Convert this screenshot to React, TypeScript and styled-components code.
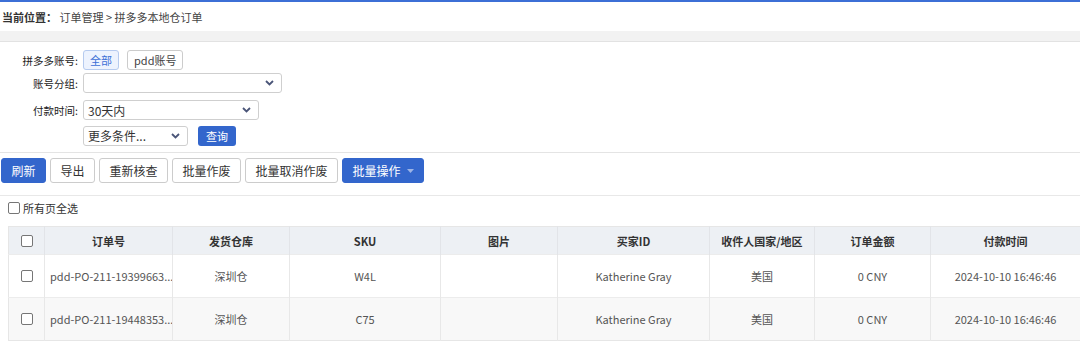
import React from "react"
import styled, { createGlobalStyle } from "styled-components"

const GlobalStyle = createGlobalStyle`
  html, body {
    margin: 0;
    padding: 0;
    background: #ffffff;
  }
  body {
    font-family: "Microsoft YaHei", "Noto Sans CJK SC", sans-serif;
    font-size: 11px;
    color: #333333;
  }
  * {
    box-sizing: border-box;
  }
`

const Page = styled.div`
  width: 1080px;
  border-top: 2px solid #3c6fd6;
`

const Breadcrumb = styled.div`
  height: 29px;
  display: flex;
  align-items: center;
  padding-left: 2px;
  font-size: 11px;
  color: #444;
  white-space: pre;

  b {
    font-weight: 700;
    color: #333;
  }
`

const GrayBand = styled.div`
  height: 11px;
  background: #f2f2f2;
  border-bottom: 1px solid #e2e2e2;
`

const FilterPanel = styled.div`
  padding: 8px 0 0 0;
  border-bottom: 1px solid #e4e4e4;
  display: grid;
  grid-template-columns: 80px 1fr;
  grid-auto-rows: 20px;
  row-gap: 3px;
  align-items: center;
  height: 111px;
`

const Label = styled.div<{ $gap?: number }>`
  text-align: right;
  padding-right: 2px;
  color: #222;
  font-size: 10.5px;
  margin-top: ${(p) => p.$gap || 0}px;
`

const Controls = styled.div<{ $gap?: number }>`
  display: flex;
  align-items: center;
  gap: 8px;
  padding-left: 3px;
  margin-top: ${(p) => p.$gap || 0}px;
`

const Chip = styled.button<{ $active?: boolean }>`
  height: 20px;
  padding: 0 6px;
  font: inherit;
  font-size: 11px;
  border-radius: 3px;
  border: 1px solid ${(p) => (p.$active ? "#b6cbef" : "#cccccc")};
  background: ${(p) => (p.$active ? "#edf3fe" : "#ffffff")};
  color: ${(p) => (p.$active ? "#3c6fd6" : "#444")};
`

const SelectBox = styled.div<{ $width: number }>`
  width: ${(p) => p.$width}px;
  height: 20px;
  border: 1px solid #cfcfcf;
  border-radius: 3px;
  display: flex;
  align-items: center;
  justify-content: space-between;
  padding: 0 7px 0 4px;
  font-size: 12px;
  color: #333;
  background: #fff;
`

const QueryButton = styled.button`
  height: 20px;
  width: 38px;
  margin-left: 2px;
  border: none;
  border-radius: 3px;
  background: #3366cc;
  color: #fff;
  font: inherit;
  font-size: 11px;
`

const Toolbar = styled.div`
  display: flex;
  gap: 4px;
  padding: 5px 0 12px 1px;
  border-bottom: 1px solid #e8e8e8;
`

const ToolButton = styled.button<{ $primary?: boolean }>`
  height: 25px;
  padding: 0 9.5px;
  font: inherit;
  font-size: 12px;
  border-radius: 3px;
  border: 1px solid ${(p) => (p.$primary ? "#3366cc" : "#cccccc")};
  background: ${(p) => (p.$primary ? "#3366cc" : "#ffffff")};
  color: ${(p) => (p.$primary ? "#ffffff" : "#333")};
  display: flex;
  align-items: center;
  gap: 6px;
`

const SelectAll = styled.label`
  display: flex;
  align-items: center;
  gap: 3px;
  height: 24px;
  padding-left: 8px;
  font-size: 11px;
  color: #333;
`

const Check = styled.input.attrs({ type: "checkbox" })`
  appearance: none;
  margin: 0;
  width: 12px;
  height: 12px;
  border: 1px solid #767676;
  border-radius: 2px;
  background: #fff;
`

const Table = styled.table`
  margin: 6px 0 0 8px;
  width: 1072px;
  border-collapse: collapse;
  table-layout: fixed;
  border: 1px solid #e6e6e6;
  font-size: 11px;
`

const Th = styled.th`
  height: 28px;
  background: #edf0f4;
  color: #333;
  font-weight: 700;
  border-right: 1px solid #e2e4e8;
  padding: 0;
  text-align: center;
`

const Tr = styled.tr<{ $alt?: boolean }>`
  background: ${(p) => (p.$alt ? "#f8f8f8" : "#ffffff")};
`

const Td = styled.td<{ $left?: boolean }>`
  height: 43px;
  color: #555;
  border-right: 1px solid #e8e8e8;
  border-top: 1px solid #ececec;
  text-align: ${(p) => (p.$left ? "left" : "center")};
  padding: ${(p) => (p.$left ? "0 0 0 5px" : "0")};
  white-space: nowrap;
  overflow: hidden;
`

const CheckCell = styled.div`
  display: flex;
  justify-content: center;
  align-items: center;
`

const Chevron = () => (
  <svg width="9" height="6" viewBox="0 0 9 6">
    <path d="M1 1 L4.5 4.5 L8 1" fill="none" stroke="#4a5578" strokeWidth="1.8" />
  </svg>
)

const Caret = () => (
  <svg width="7" height="4" viewBox="0 0 7 4">
    <path d="M0 0 L7 0 L3.5 4 Z" fill="#9db4e6" />
  </svg>
)

const columns = [
  { key: "check", width: 36 },
  { key: "订单号", width: 128 },
  { key: "发货仓库", width: 117 },
  { key: "SKU", width: 151 },
  { key: "图片", width: 117 },
  { key: "买家ID", width: 152 },
  { key: "收件人国家/地区", width: 105 },
  { key: "订单金额", width: 116 },
  { key: "付款时间", width: 150 },
]

const orders = [
  { id: "pdd-PO-211-19399663...", wh: "深圳仓", sku: "W4L", buyer: "Katherine Gray", country: "美国", amount: "0 CNY", time: "2024-10-10 16:46:46" },
  { id: "pdd-PO-211-19448353...", wh: "深圳仓", sku: "C75", buyer: "Katherine Gray", country: "美国", amount: "0 CNY", time: "2024-10-10 16:46:46" },
]

const App: React.FC = () => {
  return (
    <Page>
      <GlobalStyle />
      <Breadcrumb>
        <b>当前位置：</b>
        {" 订单管理 > 拼多多本地仓订单"}
      </Breadcrumb>
      <GrayBand />

      <FilterPanel>
        <Label>拼多多账号:</Label>
        <Controls>
          <Chip $active>全部</Chip>
          <Chip>pdd账号</Chip>
        </Controls>

        <Label>账号分组:</Label>
        <Controls>
          <SelectBox $width={199}>
            <span />
            <Chevron />
          </SelectBox>
        </Controls>

        <Label $gap={8}>付款时间:</Label>
        <Controls $gap={8}>
          <SelectBox $width={176}>
            <span>30天内</span>
            <Chevron />
          </SelectBox>
        </Controls>

        <Label $gap={13} />
        <Controls $gap={13}>
          <SelectBox $width={105}>
            <span>更多条件...</span>
            <Chevron />
          </SelectBox>
          <QueryButton>查询</QueryButton>
        </Controls>
      </FilterPanel>

      <Toolbar>
        <ToolButton $primary>刷新</ToolButton>
        <ToolButton>导出</ToolButton>
        <ToolButton>重新核查</ToolButton>
        <ToolButton>批量作废</ToolButton>
        <ToolButton>批量取消作废</ToolButton>
        <ToolButton $primary>
          批量操作
          <Caret />
        </ToolButton>
      </Toolbar>

      <SelectAll>
        <Check />
        所有页全选
      </SelectAll>

      <Table>
        <colgroup>
          {columns.map((c) => (
            <col key={c.key} style={{ width: c.width }} />
          ))}
        </colgroup>
        <thead>
          <tr>
            {columns.map((c) => (
              <Th key={c.key}>
                {c.key === "check" ? (
                  <CheckCell>
                    <Check />
                  </CheckCell>
                ) : (
                  c.key
                )}
              </Th>
            ))}
          </tr>
        </thead>
        <tbody>
          {orders.map((o, i) => (
            <Tr key={o.id} $alt={i % 2 === 1}>
              <Td>
                <CheckCell>
                  <Check />
                </CheckCell>
              </Td>
              <Td $left>{o.id}</Td>
              <Td>{o.wh}</Td>
              <Td>{o.sku}</Td>
              <Td />
              <Td>{o.buyer}</Td>
              <Td>{o.country}</Td>
              <Td>{o.amount}</Td>
              <Td>{o.time}</Td>
            </Tr>
          ))}
        </tbody>
      </Table>
    </Page>
  )
}

export default App
